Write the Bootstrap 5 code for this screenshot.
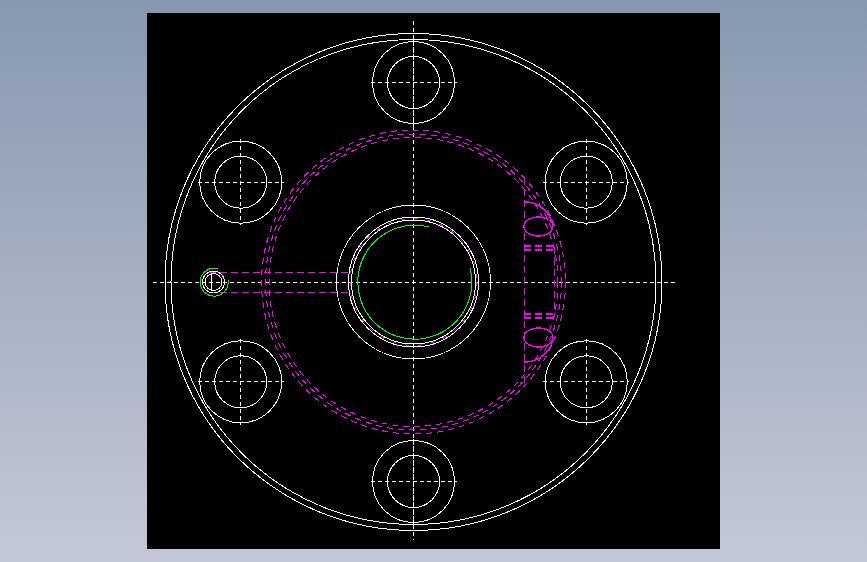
<!DOCTYPE html>
<html lang="en">
<head>
<meta charset="utf-8">
<title>CAD drawing</title>
<link rel="stylesheet" href="https://cdn.jsdelivr.net/npm/bootstrap@5.3.0/dist/css/bootstrap.min.css">
<style>
html,body{height:100%;}
body{background:linear-gradient(180deg,#8798ae 0%,#c3c8d6 100%);overflow:hidden;}
.viewport-shell{height:562px;}
.drawing-sheet{width:573px;height:536px;background:#000;}
.drawing-sheet svg{display:block;width:573px;height:536px;shape-rendering:crispEdges;}
.w{fill:none;stroke:#fff;stroke-width:1;}
.c{fill:none;stroke:#fff;stroke-width:1;stroke-dasharray:4 3;}
.m{fill:none;stroke:#f0f;stroke-width:1;stroke-dasharray:6 5;}
.ms{fill:none;stroke:#f0f;stroke-width:1.3;}
.md{fill:none;stroke:#f0f;stroke-width:1.3;stroke-dasharray:7 4;}
.mi{fill:none;stroke:#f0f;stroke-width:1;stroke-dasharray:4 9;}
.g{fill:none;stroke:#0f0;stroke-width:1;}
</style>
</head>
<body class="m-0">
<div class="viewport-shell d-flex justify-content-center align-items-center">
<div class="drawing-sheet">
<svg viewBox="147 13 573 536" xmlns="http://www.w3.org/2000/svg" role="img" aria-label="Flange drawing">
<defs>
<g id="bolt">
<circle class="w" r="41"/><circle class="w" r="26"/>
<path class="c" d="M-43 0H43M0 -43V43"/>
</g>
</defs>
<circle class="w" cx="413.5" cy="282" r="248.5"/>
<circle class="w" cx="413.5" cy="282" r="242.5"/>
<use href="#bolt" x="413.5" y="82.5"/>
<use href="#bolt" x="413.5" y="481.5"/>
<use href="#bolt" x="240.7" y="182.2"/>
<use href="#bolt" x="586.3" y="182.2"/>
<use href="#bolt" x="240.7" y="381.8"/>
<use href="#bolt" x="586.3" y="381.8"/>
<path class="c" d="M153 282H675M413.5 21V540"/>
<circle class="m" cx="413.5" cy="282" r="152"/>
<circle class="m" cx="413.5" cy="282" r="148"/>
<circle class="m" cx="413.5" cy="282" r="144.5"/>
<circle class="w" cx="413.5" cy="282" r="77"/>
<circle class="w" cx="413.5" cy="282" r="65"/>
<circle class="w" cx="413.5" cy="282" r="62"/>
<circle class="mi" cx="413.5" cy="282" r="63.5"/>
<path class="g" d="M429 227A57 57 0 1 0 470 268"/>
<path class="md" d="M209 272.5H350M209 292.5H350"/>
<circle class="w" cx="213.5" cy="282" r="11"/>
<circle class="w" cx="213.5" cy="282" r="8.5"/>
<path class="g" d="M218 268.7A14 14 0 1 0 228 280"/>
<path class="w" d="M211.5 274V290"/>
<path class="md" d="M524.5 178V385M554.5 247V317M524 246H554M524 250H554M524 314H554M524 318H554"/>
<ellipse class="ms" cx="538.5" cy="226.5" rx="14.5" ry="9.5"/>
<ellipse class="ms" cx="538.5" cy="337.5" rx="14.5" ry="9.5"/>
<path class="ms" d="M524 202C538 201 550 212 553 225M524 362C538 363 550 352 553 340"/>
</svg>
</div>
</div>
<script src="https://cdn.jsdelivr.net/npm/bootstrap@5.3.0/dist/js/bootstrap.bundle.min.js"></script>
</body>
</html>
